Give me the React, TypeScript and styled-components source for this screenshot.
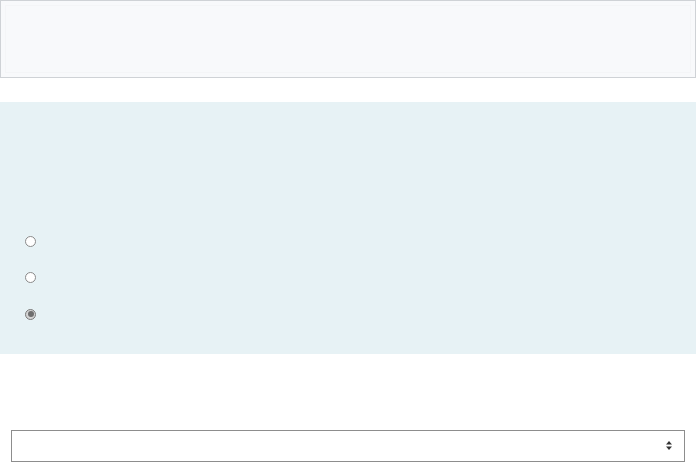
import React from "react";
import styled, { createGlobalStyle } from "styled-components";

const Global = createGlobalStyle`
  html, body { margin: 0; padding: 0; background: #ffffff; }
  body { font-family: "Liberation Sans", Arial, sans-serif; font-size: 14px; color: #212529; }
  * { box-sizing: border-box; }
`;

const Page = styled.div`
  display: flex;
  flex-direction: column;
  width: 696px;
`;

const Header = styled.div`
  height: 78px;
  border: 1px solid #cfd2d6;
  background: #f8f9fb;
  padding: 4px;
`;

const HeaderInner = styled.div`
  height: 100%;
  border: 1px solid #f4f5f7;
`;

const Panel = styled.section`
  margin-top: 24px;
  height: 252px;
  background: #e7f2f5;
  display: flex;
  flex-direction: column;
  gap: 22.5px;
  padding: 132px 0 0 25px;
`;

const Radio = styled.input.attrs({ type: "radio" })`
  appearance: none;
  margin: 0;
  width: 11px;
  height: 11px;
  border-radius: 50%;
  border: 1px solid #8a8a8a;
  background: #ffffff;
  display: grid;
  place-items: center;
  &:checked::after {
    content: "";
    width: 6px;
    height: 6px;
    border-radius: 50%;
    background: #6e6e6e;
  }
  &:checked {
    background: #d4d4d4;
    border-color: #7a7a7a;
  }
`;

const RadioRow = styled.label`
  display: flex;
  align-items: center;
  height: 14px;
`;

const SelectWrap = styled.div`
  position: relative;
  margin: 76px 11px 0 11px;
`;

const Select = styled.select`
  appearance: none;
  width: 100%;
  height: 32px;
  border: 1px solid #8d8d8d;
  border-radius: 0;
  background: #ffffff;
  font-family: "Liberation Sans", Arial, sans-serif;
  font-size: 14px;
  padding: 0 24px 0 8px;
`;

const Arrows = styled.svg`
  position: absolute;
  right: 12px;
  top: 10px;
  pointer-events: none;
`;

export default function App() {
  return (
    <Page>
      <Global />
      <Header>
        <HeaderInner />
      </Header>
      <Panel>
        <RadioRow><Radio name="opt" disabled /></RadioRow>
        <RadioRow><Radio name="opt" disabled /></RadioRow>
        <RadioRow><Radio name="opt" disabled defaultChecked /></RadioRow>
      </Panel>
      <SelectWrap>
        <Select defaultValue="">
          <option value=""></option>
        </Select>
        <Arrows width="8" height="11" viewBox="0 0 8 11">
          <path d="M4 1 L7 4.5 H1 Z" fill="#333" />
          <path d="M4 10 L7 6.5 H1 Z" fill="#333" />
        </Arrows>
      </SelectWrap>
    </Page>
  );
}
